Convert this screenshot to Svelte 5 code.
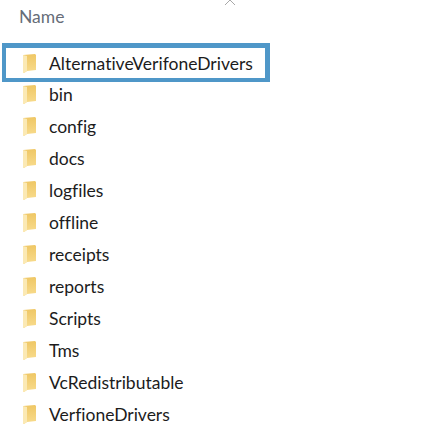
<script>
  const folders = [
    'AlternativeVerifoneDrivers',
    'bin',
    'config',
    'docs',
    'logfiles',
    'offline',
    'receipts',
    'reports',
    'Scripts',
    'Tms',
    'VcRedistributable',
    'VerfioneDrivers',
  ];
</script>

<main class="explorer">
  <svg class="sort" width="12" height="5" viewBox="0 0 12 5" aria-hidden="true">
    <path d="M1 5 L6 0 L11 5" fill="none" stroke="#a8a8a8" stroke-width="1" />
  </svg>

  <header class="head">Name</header>

  <ul class="list">
    {#each folders as name, i}
      <li class="row" class:selected={i === 0}>
        <svg class="folder" width="15" height="21" viewBox="0 0 15 21" aria-hidden="true">
          <defs>
            <linearGradient id="gold-{i}" x1="0" y1="0" x2="0" y2="1">
              <stop offset="0" stop-color="#efc765" />
              <stop offset="1" stop-color="#f8dc8e" />
            </linearGradient>
          </defs>
          <path d="M1 2 L13 1 L14 2 L14 17 L5 18 L2 20 L1 20 Z" fill="url(#gold-{i})" />
          <path d="M1 2 L5 3 L5 18 L2 20 L1 20 Z" fill="#fbe9b4" />
        </svg>
        <span class="label">{name}</span>
      </li>
    {/each}
  </ul>
</main>

<style>
  :global(body) {
    background: #fff;
  }
  .explorer {
    position: relative;
    width: 448px;
    height: 437px;
    overflow: hidden;
    font-family: "Lato", "Open Sans", sans-serif;
    font-variant-ligatures: none;
    color: #1c1c1c;
  }
  .sort {
    position: absolute;
    left: 224px;
    top: 0;
  }
  .head {
    padding: 5px 0 0 19px;
    height: 38px;
    box-sizing: border-box;
    font-size: 17.5px;
    line-height: 24px;
    color: #666d78;
  }
  .list {
    list-style: none;
    margin: 0;
    padding: 0;
  }
  .row {
    display: flex;
    align-items: center;
    gap: 12px;
    height: 32px;
    padding-left: 22px;
    font-size: 17.5px;
  }
  .row.selected {
    width: 268px;
    height: 39px;
    box-sizing: border-box;
    margin: 5px 0 -4px 2px;
    padding-left: 16px;
    border: solid #4f97c8;
    border-width: 5px 5px 4px 4px;
  }
  .folder {
    flex: none;
  }
  .label {
    white-space: nowrap;
  }
</style>
